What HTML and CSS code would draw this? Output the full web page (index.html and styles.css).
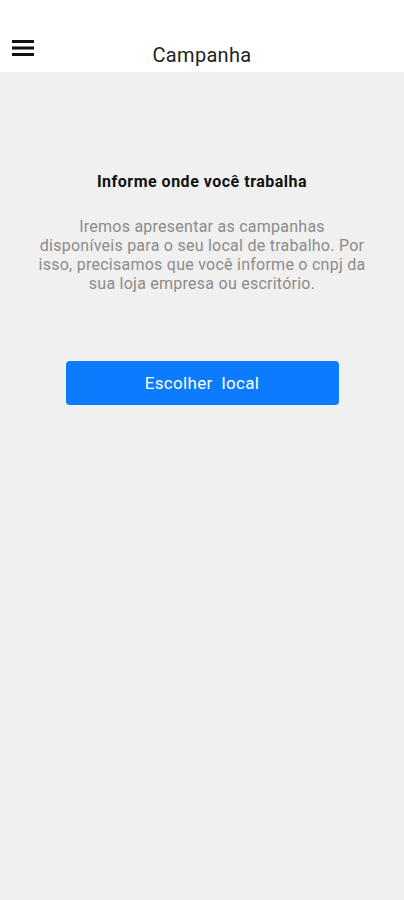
FILE: index.html
```html
<!DOCTYPE html>
<html lang="pt-BR">
  <head>
    <meta charset="UTF-8" />
    <meta name="viewport" content="width=device-width, initial-scale=1.0" />
    <title>Campanha</title>
    <link rel="stylesheet" href="styles.css">
  </head>
  <body>
    <div class="app">
      <header class="topbar">
        <button class="menu-btn" aria-label="Menu">
          <svg width="22" height="18" viewBox="0 0 22 18">
            <rect x="0" y="1" width="22" height="3" fill="#111" />
            <rect x="0" y="7.5" width="22" height="3" fill="#111" />
            <rect x="0" y="14" width="22" height="3" fill="#111" />
          </svg>
        </button>
        <h1 class="topbar-title">Campanha</h1>
      </header>
      <main class="content">
        <h2 class="content-title">Informe onde você trabalha</h2>
        <p class="content-text">
          Iremos apresentar as campanhas disponíveis para o seu local de trabalho. Por isso, precisamos que você informe o cnpj da sua loja empresa ou escritório.
        </p>
        <button class="primary-btn">Escolher&nbsp; local</button>
      </main>
    </div>
  </body>
</html>
```

FILE: styles.css
```css
* {
  box-sizing: border-box;
  margin: 0;
  padding: 0;
  border: 0;
}

body {
  font-family: Roboto, "Liberation Sans", sans-serif;
  background-color: #f0f0f0;
  width: 404px;
  height: 900px;
  overflow: hidden;
}

.app {
  display: flex;
  flex-direction: column;
  min-height: 900px;
}

.topbar {
  position: relative;
  height: 72px;
  background-color: #fff;
  display: flex;
  justify-content: center;
  align-items: flex-end;
  padding-bottom: 5px;
}

.menu-btn {
  position: absolute;
  left: 12px;
  top: 39px;
  background: none;
  display: flex;
}

.topbar-title {
  font-size: 20px;
  font-weight: 400;
  letter-spacing: 0.3px;
  color: #222;
}

.content {
  display: flex;
  flex-direction: column;
  align-items: center;
  padding: 100px 38px 0;
}

.content-title {
  font-size: 16px;
  font-weight: 700;
  letter-spacing: 0.5px;
  color: #111;
  line-height: 20px;
}

.content-text {
  margin-top: 25px;
  font-size: 16px;
  letter-spacing: 0.25px;
  line-height: 19px;
  color: #8c8c8c;
  text-align: center;
}

.primary-btn {
  margin-top: 68px;
  width: 273px;
  height: 44px;
  border-radius: 4px;
  background-color: #0d7bfe;
  color: #fff;
  font-family: Roboto, "Liberation Sans", sans-serif;
  font-size: 17px;
  letter-spacing: 0.3px;
}
```
